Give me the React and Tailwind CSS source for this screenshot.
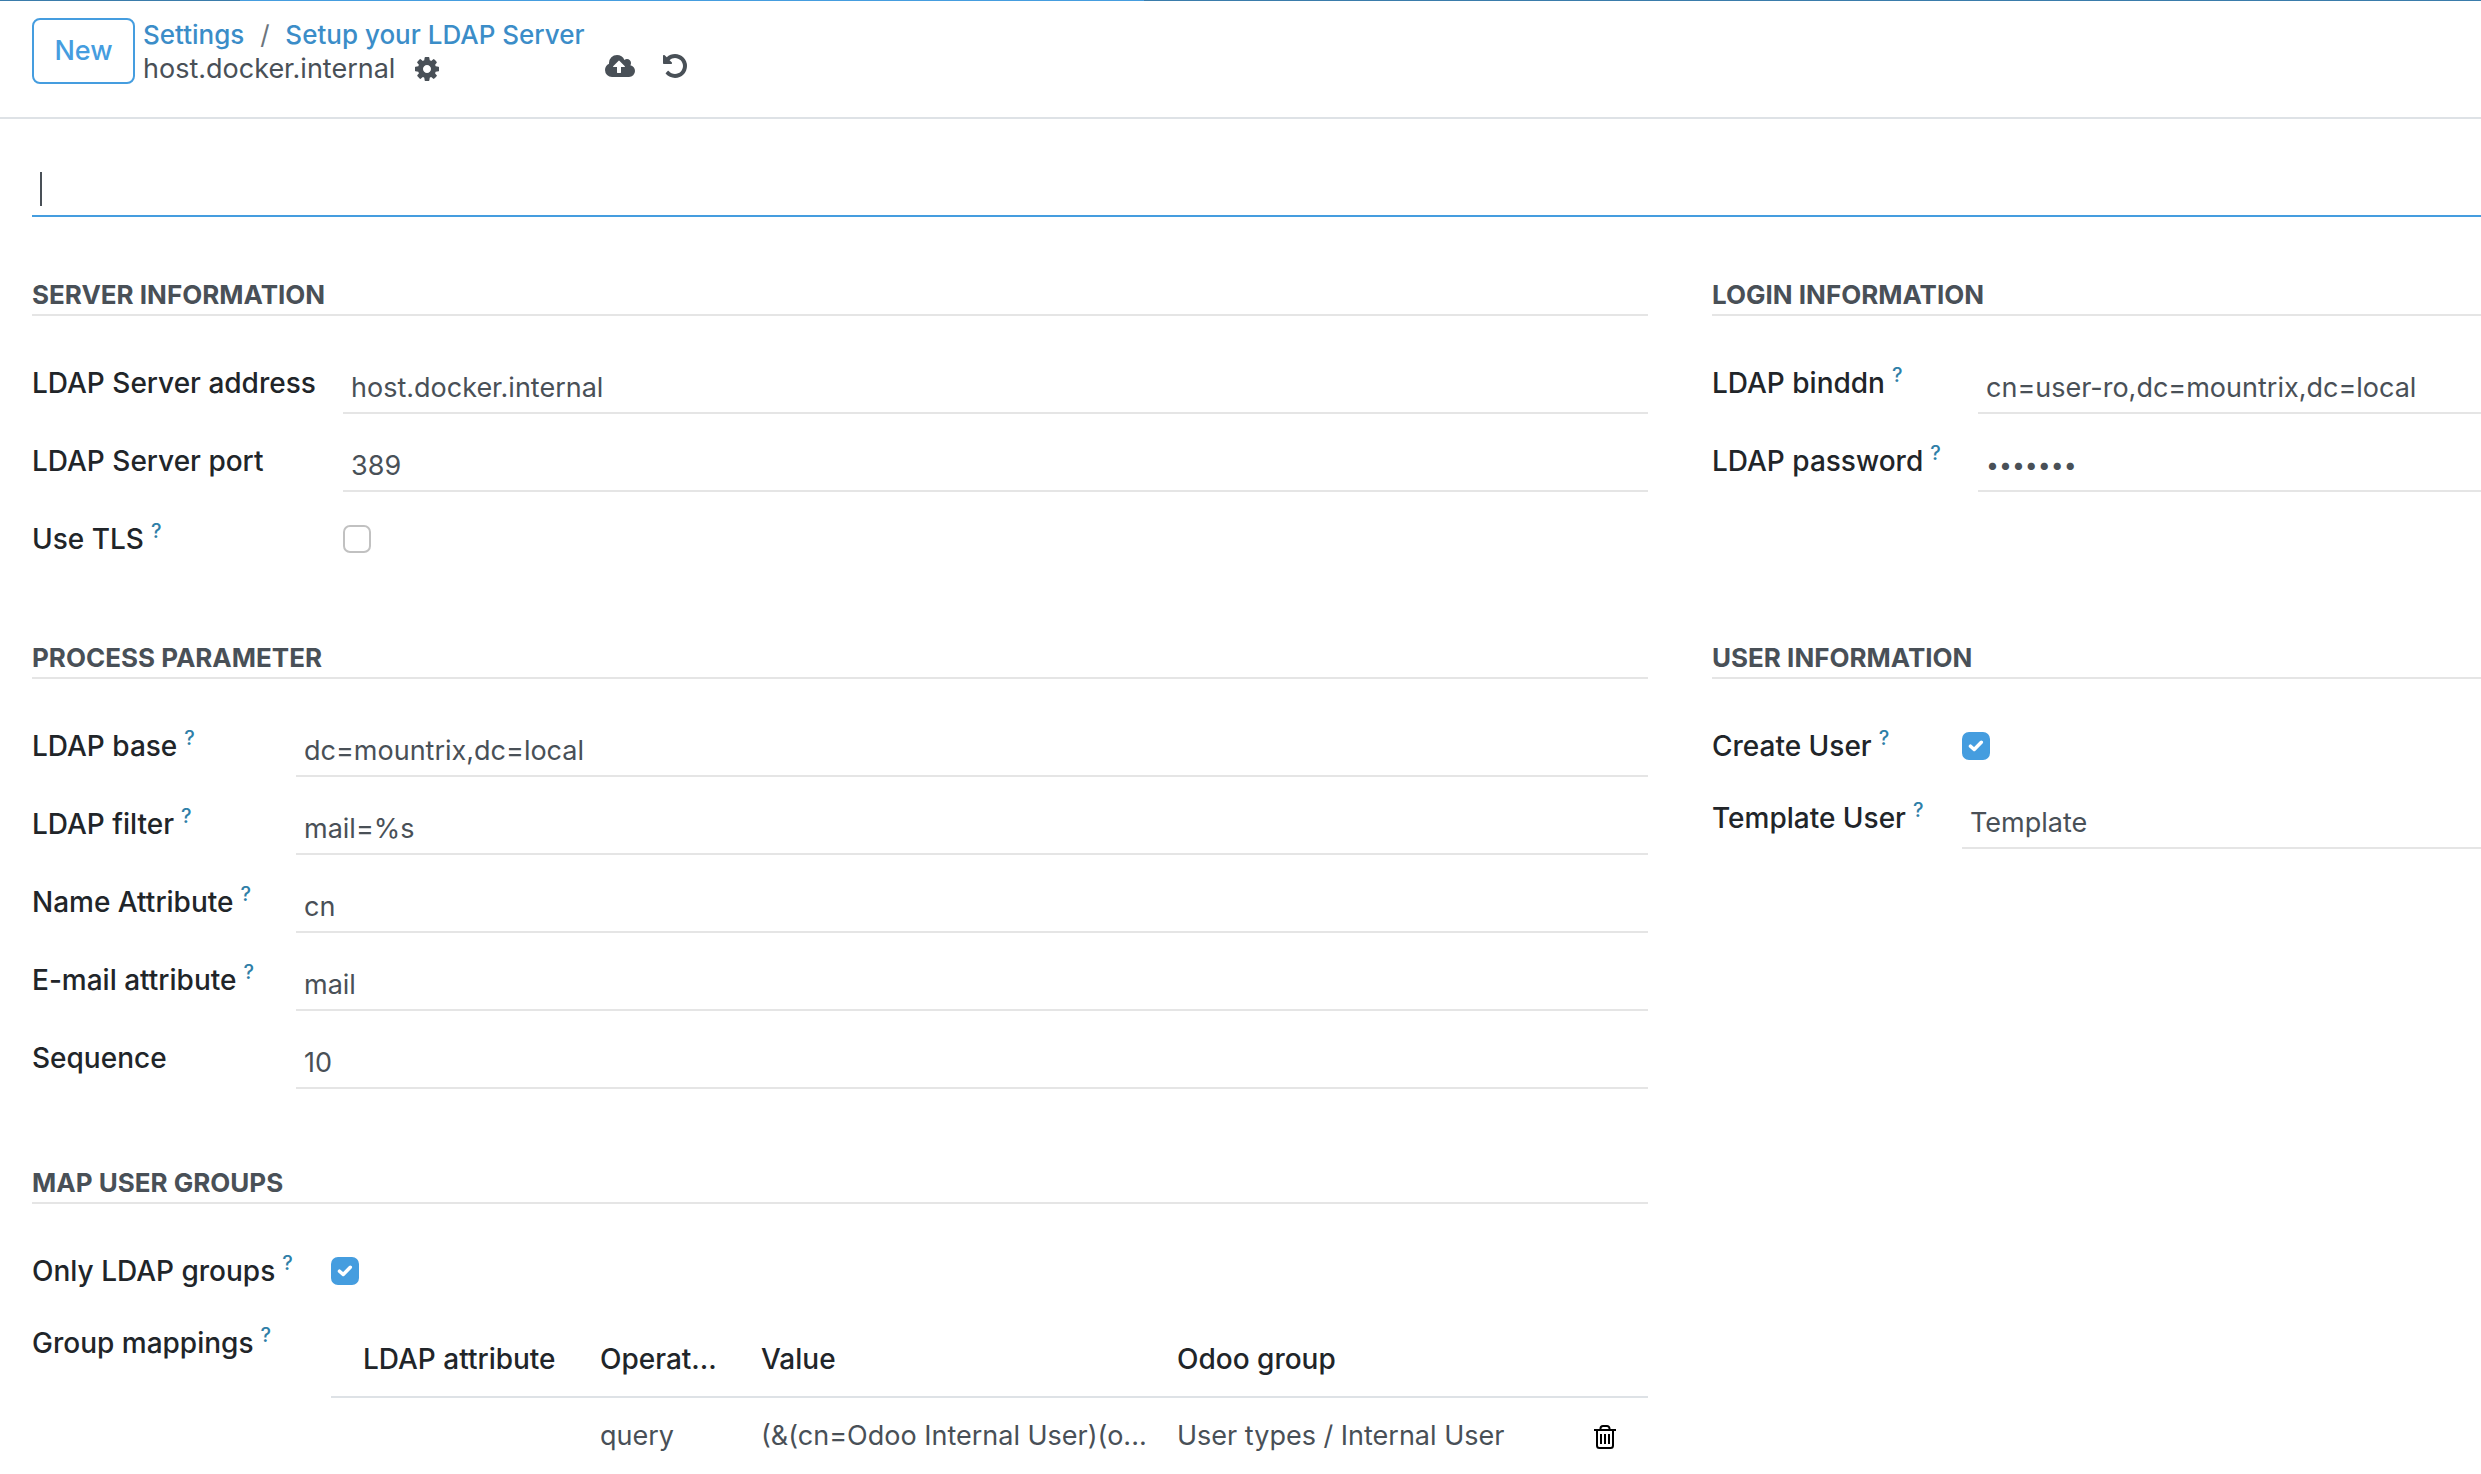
import React, { useId } from "react";

const FONT = "font-['Inter','Liberation_Sans',sans-serif]";

function GearIcon() {
  return (
    <svg viewBox="128 128 1536 1536" className="size-6" fill="currentColor" aria-hidden="true">
      <path d="M1152 896q0-106-75-181t-181-75-181 75-75 181 75 181 181 75 181-75 75-181zm512-109v222q0 12-8 23t-20 13l-185 28q-19 54-39 91 35 50 107 138 10 12 10 25t-9 23q-27 37-99 108t-94 71q-12 0-26-9l-138-108q-44 23-91 38-16 136-29 186-7 28-36 28h-222q-14 0-24.5-8.5t-11.5-21.5l-28-184q-49-16-90-37l-141 107q-10 9-25 9-14 0-25-11-126-114-165-168-7-10-7-23 0-12 8-23 15-21 51-66.5t54-70.5q-27-50-41-99l-183-27q-13-2-21-12.5t-8-23.5v-222q0-12 8-23t19-13l186-28q14-46 39-92-40-57-107-138-10-12-10-24 0-10 9-23 26-36 98.5-107.5t94.5-71.5q13 0 26 10l138 107q44-23 91-38 16-136 29-186 7-28 36-28h222q14 0 24.5 8.5t11.5 21.5l28 184q49 16 90 37l142-107q9-9 24-9 13 0 25 10 129 119 165 170 7 8 7 22 0 12-8 23-15 21-51 66.5t-54 70.5q26 50 41 98l183 28q13 2 21 12.5t8 23.5z" />
    </svg>
  );
}

function CloudUploadIcon() {
  return (
    <svg viewBox="-64 128 1920 1408" className="h-[22px] w-[30px]" fill="currentColor" aria-hidden="true">
      <path d="M1216 864q0-14-9-23l-352-352q-9-9-23-9t-23 9l-351 351q-10 12-10 24 0 14 9 23t23 9h224v352q0 13 9.5 22.5t22.5 9.5h192q13 0 22.5-9.5t9.5-22.5v-352h224q13 0 22.5-9.5t9.5-22.5zm640 288q0 159-112.5 271.5t-271.5 112.5h-1088q-185 0-316.5-131.5t-131.5-316.5q0-130 70-240t188-165q-2-30-2-43 0-212 150-362t362-150q156 0 285.5 87t188.5 231q71-62 166-62 106 0 181 75t75 181q0 76-41 138 130 31 213.5 135.5t83.5 238.5z" />
    </svg>
  );
}

function UndoIcon() {
  return (
    <svg viewBox="128 128 1536 1536" className="size-6" fill="currentColor" aria-hidden="true">
      <path d="M1664 896q0 156-61 298t-164 245-245 164-298 61q-172 0-327-72.5t-264-204.5q-7-10-6.5-22.5t8.5-20.5l137-138q10-9 25-9 16 2 23 12 73 95 179 147t225 52q104 0 198.5-40.5t163.5-109.5 109.5-163.5 40.5-198.5-40.5-198.5-109.5-163.5-163.5-109.5-198.5-40.5q-98 0-188 35.5t-160 101.5l137 138q31 30 14 69-17 40-59 40h-448q-26 0-45-19t-19-45v-448q0-42 40-59 39-17 69 14l130 129q107-101 244.5-156.5t284.5-55.5q156 0 298 61t245 164 164 245 61 298z" />
    </svg>
  );
}

function TrashIcon() {
  return (
    <svg viewBox="0 0 22 24" className="h-6 w-[22px]" fill="none" stroke="currentColor" strokeWidth="2" aria-hidden="true">
      <path d="M0 5h22M3 5v15.5a2.5 2.5 0 0 0 2.5 2.5h11a2.5 2.5 0 0 0 2.5-2.5V5" />
      <path d="M6.5 5V3.500a2.500 2.500 0 0 1 2.500-2.500h4a2.500 2.500 0 0 1 2.500 2.500V5" />
      <path d="M7 9v10M11 9v10M15 9v10" />
    </svg>
  );
}

function Section({ title, className = "", children }) {
  return (
    <section className={"min-w-0 " + className}>
      <h2 className="mt-[49px] mb-[46px] border-b-2 border-[#e5e5e5] text-[26px] leading-[38px] font-bold text-[#495057] uppercase">
        {title}
      </h2>
      {children}
    </section>
  );
}

function Label({ htmlFor, help, children }) {
  return (
    <label htmlFor={htmlFor} className="text-[28px] leading-[42px] font-medium whitespace-nowrap text-[#212529]">
      {children}
      {help && <sup className="-top-[11px] ml-[7px] text-[20px] font-medium text-[#2f7fa8]">?</sup>}
    </label>
  );
}

function Field({ cols, label, help, type = "text", value }) {
  const id = useId();
  return (
    <div className={"mb-[26px] grid h-[52px] items-start " + cols}>
      <Label htmlFor={id} help={help}>{label}</Label>
      <input
        id={id}
        type={type}
        defaultValue={value}
        className={
          "h-[52px] w-full min-w-0 border-b-2 border-[#e5e5e5] bg-transparent px-2 text-[#495057] outline-none " +
          (type === "password" ? "text-[23px]" : "text-[27px]")
        }
      />
    </div>
  );
}

function CheckField({ cols, label, help, checked }) {
  const id = useId();
  return (
    <div className={"mb-[26px] grid h-[46px] items-start " + cols}>
      <Label htmlFor={id} help={help}>{label}</Label>
      <span className="mt-[7px] grid size-7 place-items-center">
        <input
          id={id}
          type="checkbox"
          defaultChecked={checked}
          className="peer col-start-1 row-start-1 size-7 appearance-none rounded-[7px] border-2 border-[#c1c1c1] bg-white checked:border-[#459ddf] checked:bg-[#459ddf]"
        />
        <svg
          viewBox="0 0 16 12"
          className="pointer-events-none invisible col-start-1 row-start-1 h-3 w-4 peer-checked:visible"
          fill="none"
          stroke="white"
          strokeWidth="3.5"
          strokeLinecap="round"
          strokeLinejoin="round"
          aria-hidden="true"
        >
          <path d="M2.500 6.200 6.200 9.500 13.300 2.300" />
        </svg>
      </span>
    </div>
  );
}

const SERVER = "grid-cols-[311px_minmax(0,1fr)]";
const LOGIN = "grid-cols-[266px_minmax(0,1fr)]";
const PROCESS = "grid-cols-[264px_minmax(0,1fr)]";
const USER = "grid-cols-[250px_minmax(0,1fr)]";
const GROUPS = "grid-cols-[299px_minmax(0,1fr)]";

export default function App() {
  return (
    <div className={"overflow-hidden bg-white text-[27px] text-[#495057] " + FONT}>
      <div className="flex h-px bg-[#3a7cab]">
        <div className="w-[240px]" />
        <div className="w-[904px] bg-[#459ddf]" />
      </div>

      <header className="flex h-[118px] items-start border-b-2 border-[#dee2e6] pt-[17px] pl-8">
        <button type="button" className="h-[66px] w-[103px] rounded-lg border-2 border-[#459ddf] font-medium text-[#459ddf]">
          New
        </button>
        <div className="ml-2 flex flex-col">
          <nav aria-label="Breadcrumb" className="flex text-[26px] leading-[34px] font-medium">
            <a href="#settings" className="text-[#3b8dc8]">Settings</a>
            <span className="w-[41px] text-center font-normal text-[#6c757d]">/</span>
            <a href="#ldap" className="text-[#3b8dc8]">Setup your LDAP Server</a>
          </nav>
          <div className="flex items-center leading-[34px]">
            <span>host.docker.internal</span>
            <button type="button" aria-label="Actions" className="ml-5"><GearIcon /></button>
          </div>
        </div>
        <div className="mt-9 ml-5 flex items-center gap-7">
          <button type="button" aria-label="Save"><CloudUploadIcon /></button>
          <button type="button" aria-label="Discard"><UndoIcon /></button>
        </div>
      </header>

      <main className="pl-8">
        <div className="relative">
          <input aria-label="Company" className="block h-[98px] w-full border-b-2 border-[#459ddf] px-2 caret-transparent outline-none" />
          <span className="absolute top-[53px] left-2 h-[34px] w-0.5 bg-[#495057]" />
        </div>

        <div className="mt-2.5 grid grid-cols-[minmax(0,1616fr)_minmax(0,769fr)] gap-x-16">
          <Section title="Server Information">
            <Field cols={SERVER} label="LDAP Server address" value="host.docker.internal" />
            <Field cols={SERVER} label="LDAP Server port" value="389" />
            <CheckField cols={SERVER} label="Use TLS" help />
          </Section>

          <Section title="Login Information">
            <Field cols={LOGIN} label="LDAP binddn" help value="cn=user-ro,dc=mountrix,dc=local" />
            <Field cols={LOGIN} label="LDAP password" help type="password" value="secret1" />
          </Section>

          <Section title="Process Parameter">
            <Field cols={PROCESS} label="LDAP base" help value="dc=mountrix,dc=local" />
            <Field cols={PROCESS} label="LDAP filter" help value="mail=%s" />
            <Field cols={PROCESS} label="Name Attribute" help value="cn" />
            <Field cols={PROCESS} label="E-mail attribute" help value="mail" />
            <Field cols={PROCESS} label="Sequence" value="10" />
          </Section>

          <Section title="User Information">
            <CheckField cols={USER} label="Create User" help checked />
            <Field cols={USER} label="Template User" help value="Template" />
          </Section>

          <Section title="Map User Groups">
            <CheckField cols={GROUPS} label="Only LDAP groups" help checked />
            <div className={"grid items-start " + GROUPS}>
              <Label htmlFor="group-mappings" help>Group mappings</Label>
              <table id="group-mappings" className="w-full table-fixed border-collapse whitespace-nowrap">
                <colgroup>
                  <col className="w-[261px]" />
                  <col className="w-[161px]" />
                  <col className="w-[416px]" />
                  <col />
                  <col className="w-[76px]" />
                </colgroup>
                <thead>
                  <tr className="h-[75px] border-b-2 border-[#dee2e6] text-left text-[28px] text-[#212529]">
                    <th scope="col" className="pl-8 font-medium">LDAP attribute</th>
                    <th scope="col" className="pl-2 font-medium">Operat...</th>
                    <th scope="col" className="pl-2 font-medium">Value</th>
                    <th scope="col" className="pl-2 font-medium">Odoo group</th>
                    <th />
                  </tr>
                </thead>
                <tbody>
                  <tr className="h-[77px]">
                    <td />
                    <td className="pl-2">query</td>
                    <td className="pl-2">(&amp;(cn=Odoo Internal User)(o...</td>
                    <td className="pl-2">User types / Internal User</td>
                    <td className="pt-0.5 pl-[22px]">
                      <button type="button" aria-label="Delete row" className="block text-black"><TrashIcon /></button>
                    </td>
                  </tr>
                </tbody>
              </table>
            </div>
          </Section>
        </div>
      </main>
    </div>
  );
}
